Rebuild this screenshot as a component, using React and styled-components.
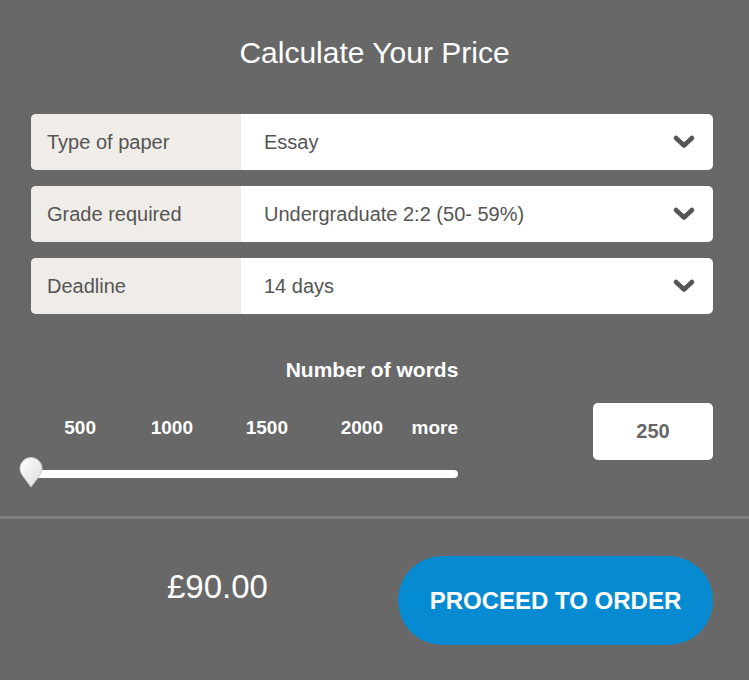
import React from 'react';
import styled, { createGlobalStyle } from 'styled-components';

const GlobalStyle = createGlobalStyle`
  body {
    margin: 0;
    background-color: #686868;
    font-family: 'Liberation Sans', Arial, sans-serif;
  }
`;

const MainWrap = styled.div`
  width: 749px;
  height: 680px;
  background-color: #686868;
  overflow: hidden;
`;

const Title = styled.h2`
  margin: 0;
  padding-top: 36px;
  line-height: 34px;
  font-size: 30px;
  font-weight: 400;
  color: #ffffff;
  text-align: center;
`;

const FormWrap = styled.div`
  margin: 44px 36px 0 31px;
  display: flex;
  flex-direction: column;
  gap: 16px;
`;

const SelectRow = styled.div`
  height: 56px;
  display: flex;
  border-radius: 5px;
  overflow: hidden;
  background-color: #ffffff;
`;

const RowLabel = styled.div`
  width: 210px;
  box-sizing: border-box;
  padding-left: 16px;
  display: flex;
  align-items: center;
  background-color: #f0ece8;
  font-size: 20px;
  color: #555555;
`;

const RowValue = styled.div`
  flex: 1;
  padding: 0 18px 0 23px;
  display: flex;
  align-items: center;
  justify-content: space-between;
  font-size: 20px;
  color: #555555;
`;

const WordsTitle = styled.h3`
  margin: 45px 0 0;
  padding-right: 5px;
  line-height: 22px;
  font-size: 21px;
  font-weight: 700;
  color: #ffffff;
  text-align: center;
`;

const SliderRow = styled.div`
  margin: 22px 36px 0 31px;
  display: flex;
  justify-content: space-between;
  align-items: flex-start;
`;

const SliderWrap = styled.div`
  width: 427px;
`;

const Ticks = styled.div`
  margin-top: 14px;
  display: grid;
  grid-template-columns: 65px 97px 95px 95px 1fr;
  line-height: 22px;
  font-size: 19px;
  font-weight: 700;
  color: #ffffff;
  text-align: right;
`;

const Track = styled.div`
  position: relative;
  margin-top: 31px;
  height: 8px;
  border-radius: 4px;
  background-color: #ffffff;
`;

const Thumb = styled.svg`
  position: absolute;
  left: -12px;
  top: -13px;
`;

const WordsInput = styled.input`
  width: 120px;
  height: 57px;
  box-sizing: border-box;
  border: none;
  border-radius: 5px;
  outline: none;
  background-color: #ffffff;
  font-family: 'Liberation Sans', Arial, sans-serif;
  font-size: 20px;
  font-weight: 700;
  color: #666666;
  text-align: center;
`;

const Divider = styled.div`
  margin-top: 38px;
  height: 3px;
  background-color: #818181;
`;

const BottomWrap = styled.div`
  margin-top: 37px;
  padding: 0 36px 0 167px;
  display: flex;
  justify-content: space-between;
  align-items: flex-start;
`;

const Price = styled.p`
  margin: 12px 0 0;
  line-height: 38px;
  font-size: 33px;
  color: #ffffff;
`;

const OrderButton = styled.button`
  width: 315px;
  height: 89px;
  border: none;
  border-radius: 45px;
  background-color: #068bd3;
  font-family: 'Liberation Sans', Arial, sans-serif;
  font-size: 24px;
  font-weight: 700;
  color: #ffffff;
  cursor: pointer;
`;

const Chevron = () => (
  <svg width="22" height="14" viewBox="0 0 22 14">
    <polyline
      points="3,3 11,10.5 19,3"
      fill="none"
      stroke="#555555"
      strokeWidth="4.5"
      strokeLinecap="round"
      strokeLinejoin="round"
    />
  </svg>
);

const rows = [
  { label: 'Type of paper', value: 'Essay' },
  { label: 'Grade required', value: 'Undergraduate 2:2 (50- 59%)' },
  { label: 'Deadline', value: '14 days' },
];

const ticks = ['500', '1000', '1500', '2000', 'more'];

const App = () => {
  return (
    <>
      <GlobalStyle />
      <MainWrap>
        <Title>Calculate Your Price</Title>
        <FormWrap>
          {rows.map((row) => (
            <SelectRow key={row.label}>
              <RowLabel>{row.label}</RowLabel>
              <RowValue>
                <span>{row.value}</span>
                <Chevron />
              </RowValue>
            </SelectRow>
          ))}
        </FormWrap>
        <WordsTitle>Number of words</WordsTitle>
        <SliderRow>
          <SliderWrap>
            <Ticks>
              {ticks.map((t) => (
                <span key={t}>{t}</span>
              ))}
            </Ticks>
            <Track>
              <Thumb width="24" height="31" viewBox="0 0 24 31">
                <defs>
                  <linearGradient id="thumbFill" x1="0" y1="0" x2="1" y2="1">
                    <stop offset="0" stopColor="#ffffff" />
                    <stop offset="1" stopColor="#dcdcdc" />
                  </linearGradient>
                </defs>
                <path
                  d="M12 30 L3.5 18.5 A11 11 0 1 1 20.5 18.5 Z"
                  fill="url(#thumbFill)"
                  stroke="#cfcfcf"
                  strokeWidth="1"
                />
              </Thumb>
            </Track>
          </SliderWrap>
          <WordsInput type="text" defaultValue="250" />
        </SliderRow>
        <Divider />
        <BottomWrap>
          <Price>£90.00</Price>
          <OrderButton>PROCEED TO ORDER</OrderButton>
        </BottomWrap>
      </MainWrap>
    </>
  );
};

export default App;
